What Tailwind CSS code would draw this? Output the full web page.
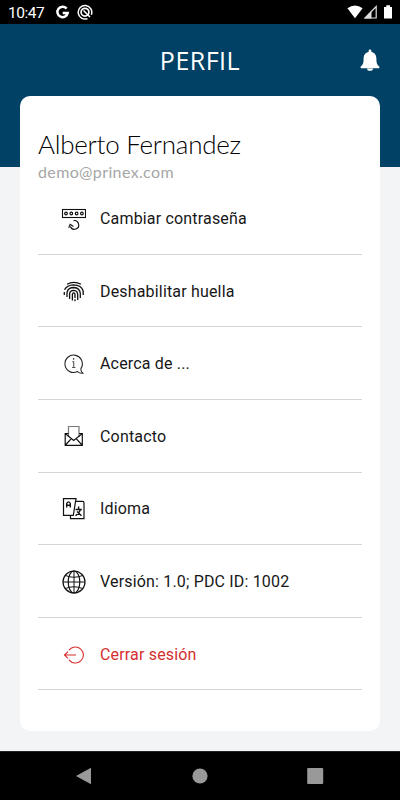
<!DOCTYPE html>
<html lang="es">
<head>
<meta charset="utf-8">
<title>Perfil</title>
<script src="https://cdn.jsdelivr.net/npm/@tailwindcss/browser@4"></script>
</head>
<body class="w-[400px] h-[800px] overflow-hidden flex flex-col bg-[#f3f4f6] font-['Roboto',sans-serif] text-[#171717]">
<div class="h-6 shrink-0 bg-black flex items-center pl-2 pr-[8px] text-white">
  <span class="text-[15.5px] leading-6 w-[36px] whitespace-nowrap pt-px tracking-[-0.5px]">10:47</span>
  <svg class="ml-[11px]" width="15" height="24" viewBox="0 0 15 24" fill="none" stroke="#fff" stroke-width="2.5"><path d="M11.6 8.6A5.2 5.2 0 1 0 12.700 13H7.700"/></svg>
  <svg class="ml-[7px]" width="16" height="24" viewBox="0 0 16 24" fill="none" stroke="#fff"><path d="M10.5 18.600A6.800 6.800 0 1 1 14.300 14.800" stroke-width="1.500"/><circle cx="8" cy="12.200" r="3.900" stroke-width="1.700"/><path d="M6.500 10.500L13 17" stroke-width="1.500"/></svg>
  <svg class="ml-auto" width="45" height="24" viewBox="0 0 45 24"><path d="M.4 8.300Q8 2.700 15.600 8.300L8 18.200Z" fill="#fff"/><path d="M18 18L29.200 6.500V18Z" fill="none" stroke="#ddd" stroke-width="1.200"/><path d="M17.300 18.500L24.500 11.200V18.500Z" fill="#ddd"/><path d="M39.300 5.300H43V7H45V18.500H37V7H39.300Z" fill="#fff"/></svg>
</div>
<header class="h-[143px] shrink-0 bg-[#004165] flex items-start justify-between px-5 text-white">
  <span class="w-5"></span>
  <h1 class="font-['Open_Sans',sans-serif] text-[25px] leading-[36px] pt-[18px] tracking-[0.5px]">PERFIL</h1>
  <svg class="mt-[25px]" width="20" height="23" viewBox="0 0 20 23" fill="#fff"><path d="M8.600 3V2a1.400 1.400 0 0 1 2.800 0V3C15 3.700 16.400 6.500 16.400 9.700c0 5 1 6.200 2.600 7.500.9.800.5 2.100-.7 2.100H1.700C.5 19.300 .1 18 1 17.200c1.600-1.300 2.600-2.500 2.600-7.500C3.600 6.500 5 3.700 8.600 3Z"/><path d="M7 19.500h6a3 2.300 0 0 1-6 0Z"/></svg>
</header>
<main class="relative mx-5 -mt-[71px] h-[635px] shrink-0 rounded-[10px] bg-white px-[18px] pt-[32px]">
  <h2 class="font-['Lato',sans-serif] text-[26px] leading-[32px] font-light tracking-[-0.25px] whitespace-nowrap text-black">Alberto Fernandez</h2>
  <p class="font-['Lato',sans-serif] text-[16px] leading-[20px] h-[22.200px] text-[#a6a6a6] whitespace-nowrap pt-[2px] tracking-[0.37px]">demo@prinex.com</p>
  <ul class="text-[16px] tracking-[0.17px]">
    <li class="h-[72.6px] border-b border-[#d6d6d6] flex items-center pl-[23px] pt-[2px] gap-[14px]">
      <svg width="25" height="24" viewBox="0 0 25 24" fill="none" stroke="#111" stroke-width="1.1"><rect x="1.500" y="2.500" width="23" height="8"/><g stroke-width="1.200"><circle cx="5" cy="6.500" r="1.300"/><circle cx="10.300" cy="6.500" r="1.300"/><circle cx="15.600" cy="6.500" r="1.300"/><circle cx="20.900" cy="6.500" r="1.300"/></g><path d="M12.500 13.700A4.300 4.300 0 1 1 9.400 19.500M7.700 20.700L9.200 17.300L12.400 19.500"/></svg>
      <span>Cambiar contraseña</span></li>
    <li class="h-[72.6px] border-b border-[#d6d6d6] flex items-center pl-[23px] pt-[2px] gap-[14px]">
      <svg width="25" height="24" viewBox="0 0 25 24" fill="none" stroke="#111" stroke-width="1.300"><path d="M6 4.300Q13 .5 20 4.300M3.500 9.800Q6 5 12.500 4.800Q20.500 5 22.200 11V15M3.300 12V15M6 17V12.500Q7 7.500 12.800 7.500Q19 8 19.300 13.500V18M8.600 19V13.500Q9 10.300 12.700 10.300Q16.500 10.500 16.700 14.500V20M11.400 20.500V14Q12.700 11.800 14 14V18M14 19.300V21.300"/></svg>
      <span>Deshabilitar huella</span></li>
    <li class="h-[72.6px] border-b border-[#d6d6d6] flex items-center pl-[23px] pt-[2px] gap-[14px]">
      <svg width="25" height="24" viewBox="0 0 25 24" fill="none" stroke="#222" stroke-width="1.100"><path d="M16.500 19.600A8.700 8.700 0 1 1 19.900 16.600C19.600 18.500 20.500 20.200 21.800 21.200C19.500 21.500 17.800 20.800 16.500 19.600Z"/><path d="M11.200 9.700H12.700V15.500M11 15.500H14.400" stroke="#555"/><circle cx="12.600" cy="6.900" r=".8" fill="#333" stroke="none"/></svg>
      <span>Acerca de ...</span></li>
    <li class="h-[72.6px] border-b border-[#d6d6d6] flex items-center pl-[23px] pt-[2px] gap-[14px]">
      <svg width="25" height="24" viewBox="0 0 25 24" fill="none" stroke="#111" stroke-width="1.200"><path d="M7.500 12V1.500H18V12" stroke="#777"/><path d="M7.500 8.500H4.200V20.400H21.300V8.500H18M4.500 8.800L12.700 15.500L21 8.800M4.500 20L10.300 13.600M21 20L15.200 13.600"/></svg>
      <span>Contacto</span></li>
    <li class="h-[72.6px] border-b border-[#d6d6d6] flex items-center pl-[23px] pt-[2px] gap-[14px]">
      <svg width="25" height="24" viewBox="0 0 25 24" fill="none" stroke="#111" stroke-width="1.200"><path d="M2.500 1.600H15L12.300 18.400H2.500ZM14.800 4.400H21.500Q23 4.400 23 6V21.600H9.500V18.400H12.300"/><path d="M5.700 10.500V6.500Q7.500 3.200 9.300 6.500V10.500M5.700 8.200H9.300" stroke-width="1.400"/><path d="M17.600 9.500V11.700M14.500 12.500H20.800M19.500 12.700Q18 16.500 14.500 18.700M16 14.500L20.500 18.700" stroke-width="1.400"/></svg>
      <span>Idioma</span></li>
    <li class="h-[72.6px] border-b border-[#d6d6d6] flex items-center pl-[23px] pt-[2px] gap-[14px]">
      <svg width="25" height="24" viewBox="0 0 25 24" fill="none" stroke="#111" stroke-width="1.200"><circle cx="13" cy="12" r="11"/><ellipse cx="13" cy="12" rx="5.800" ry="11"/><path d="M13 1V23M2 12H24M4.500 5.500Q13 9 21.500 5.500M4.500 18.500Q13 15 21.500 18.500" stroke-width="1"/></svg>
      <span>Versión: 1.0; PDC ID: 1002</span></li>
    <li class="h-[72.6px] border-b border-[#d6d6d6] flex items-center pl-[23px] pt-[2px] gap-[14px] text-[#d32f2f]">
      <svg width="25" height="24" viewBox="0 0 25 24" fill="none" stroke="#d92b2b" stroke-width="1.100"><path d="M8 7.200A8 8 0 1 1 8 16.800M3.500 12H15M7 8.700L3.500 12L7 15.300"/></svg>
      <span>Cerrar sesión</span></li>
  </ul>
</main>
<nav class="mt-auto h-[49px] shrink-0 bg-black border-t border-[#222] flex items-center justify-between px-[76px]">
  <svg width="16" height="18" viewBox="0 0 16 18" fill="#999"><path d="M0 9L15 .7V17.300Z"/></svg>
  <svg width="16" height="16" viewBox="0 0 16 16" fill="#999"><circle cx="8" cy="8" r="7.600"/></svg>
  <svg width="17" height="16" viewBox="0 0 17 16" fill="#999"><rect x=".2" width="16" height="16" rx="1"/></svg>
</nav>
</body>
</html>
